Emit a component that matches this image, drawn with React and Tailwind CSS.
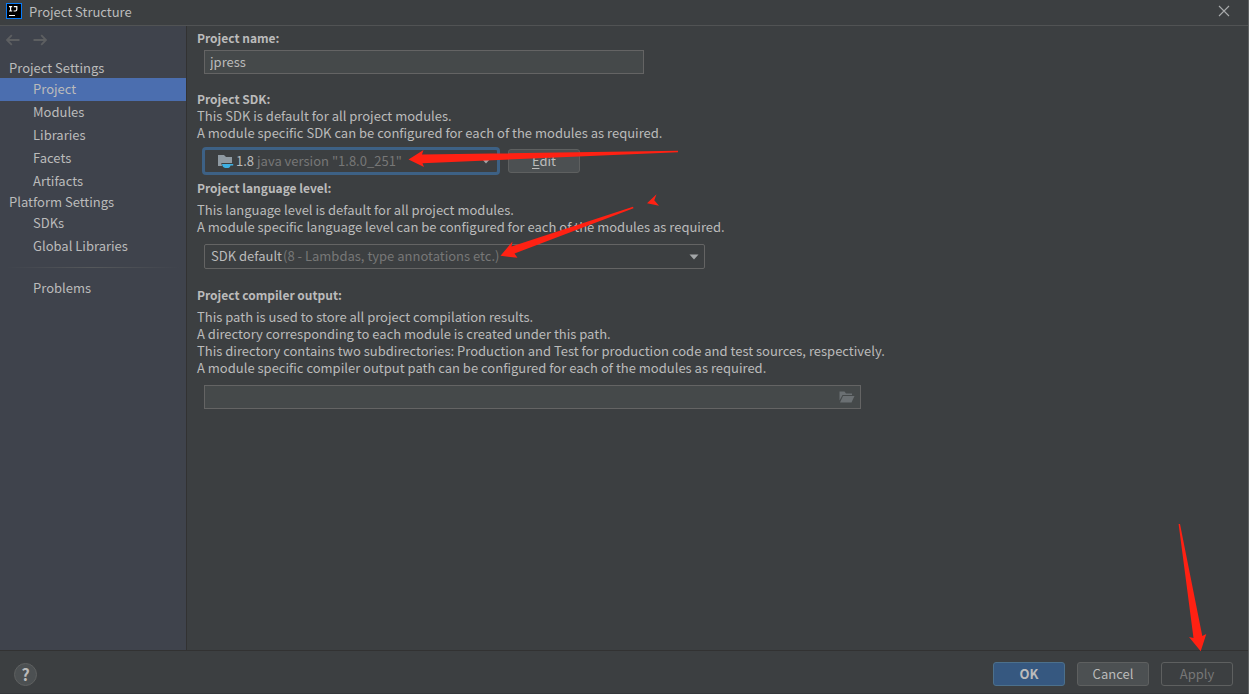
const projectSettings = ['Project', 'Modules', 'Libraries', 'Facets', 'Artifacts'];
const platformSettings = ['SDKs', 'Global Libraries'];

function NavGroup({ title, items, active }) {
  return (
    <section>
      <h2 className="h-[19px] pl-[9px] leading-[17px]">{title}</h2>
      <ul>
        {items.map((item) => (
          <NavItem key={item} label={item} active={item === active} />
        ))}
      </ul>
    </section>
  );
}

function NavItem({ label, active }) {
  return (
    <li>
      <a
        href={'#' + label}
        aria-current={active ? 'page' : undefined}
        className={'block h-[23px] pl-[33px] leading-[21px] ' + (active ? 'bg-[#4b6eaf]' : '')}
      >
        {label}
      </a>
    </li>
  );
}

function NavArrow({ flip, label }) {
  return (
    <button type="button" aria-label={label} className="text-[#5d5f61]">
      <svg width="14" height="12" viewBox="0 0 14 12" fill="none" stroke="currentColor" strokeWidth="1.8">
        {flip ? <path d="M0.5 6H13M8.2 1.2L13 6L8.2 10.8" /> : <path d="M13.5 6H1M5.8 1.2L1 6L5.8 10.8" />}
      </svg>
    </button>
  );
}

function Caret() {
  return (
    <svg width="10" height="6" viewBox="0 0 10 6" fill="#a3a6a8">
      <path d="M0.5 0.5H9.5L5 5.5Z" />
    </svg>
  );
}

function Button({ children, look, ...rest }) {
  return (
    <button type="button" className={'h-6 w-[72px] rounded-[3px] border text-center leading-[22px] ' + look} {...rest}>
      {children}
    </button>
  );
}

const plain = 'border-[#5e6060] bg-[#4c5052]';

function Label({ htmlFor, children }) {
  return (
    <label htmlFor={htmlFor} className="block text-[12px] font-bold">
      {children}
    </label>
  );
}

export default function App() {
  return (
    <div className="relative flex min-h-screen flex-col overflow-hidden border-r border-[#606364] bg-[#3c3f41] font-['Noto_Sans_CJK_SC','Noto_Sans',sans-serif] text-[13px] leading-[17px] text-[#bbbbbb]">
      <header className="flex h-[26px] items-center justify-between border-b border-[#515354] pr-[18px] pb-[3px] pl-[6px]">
        <div className="flex items-center gap-[7px]">
          <svg width="16" height="16" viewBox="0 0 16 16">
            <rect x="0.5" y="0.5" width="15" height="15" fill="#000" stroke="#087cfa" />
            <path
              d="M3 3.6H6.2M4.6 3.6V8M3 8H6.2M7.8 3.6H10.8V6.6Q10.8 8 9.4 8H7.6M3 12.5H9"
              fill="none"
              stroke="#fff"
              strokeWidth="1.2"
            />
          </svg>
          <h1>Project Structure</h1>
        </div>
        <button type="button" aria-label="Close">
          <svg width="12" height="12" viewBox="0 0 12 12" fill="none" stroke="#a9abac" strokeWidth="1.1">
            <path d="M1 1L11 11M11 1L1 11" />
          </svg>
        </button>
      </header>

      <div className="flex grow">
        <nav className="w-[187px] shrink-0 border-r border-[#323232] bg-[#3f434c]">
          <div className="flex h-[33px] items-center gap-[13px] pb-[5px] pl-[6px]">
            <NavArrow label="Back" />
            <NavArrow label="Forward" flip />
          </div>
          <NavGroup title="Project Settings" items={projectSettings} active="Project" />
          <NavGroup title="Platform Settings" items={platformSettings} />
          <div className="mx-[6px] my-[9px] h-px bg-linear-to-r from-transparent via-[#55585b] to-transparent" />
          <ul>
            <NavItem label="Problems" />
          </ul>
        </nav>

        <main className="min-w-0 grow pt-[3px] pl-[10px]">
          <section>
            <Label htmlFor="name">Project name:</Label>
            <input
              id="name"
              defaultValue="jpress"
              className="mt-1 ml-[7px] block h-6 w-[440px] border border-[#646464] bg-[#45494a] px-[5px] pb-[2px] outline-none"
            />
          </section>

          <section className="mt-4">
            <Label htmlFor="sdk">Project SDK:</Label>
            <p>This SDK is default for all project modules.</p>
            <p>A module specific SDK can be configured for each of the modules as required.</p>
            <div className="mt-[6px] ml-[5px] flex items-center gap-2">
              <div className="relative w-[298px]">
                <select
                  id="sdk"
                  className="block h-7 w-full appearance-none rounded-[4px] border-[3px] border-[#3d6185] bg-transparent pb-[2px] pl-[31px] outline-none"
                >
                  <option>1.8</option>
                </select>
                <div className="pointer-events-none absolute inset-0 flex items-center pr-[9px] pl-4">
                  <svg width="16" height="16" viewBox="0 0 16 16">
                    <path d="M0 2H6L8 4H14V13H0Z" fill="#8f9aa2" />
                    <path d="M3.2 10H15V13L11.5 15H4.6Z" fill="#3c3f41" />
                    <path d="M4 11H15.2V12.6H12.6Q12 15 10.4 15H7.2Q4.4 14.4 4 11Z" fill="#3fb1e3" />
                  </svg>
                  <span className="ml-[23px] grow pb-[2px] text-[#777777]">java version "1.8.0_251"</span>
                  <Caret />
                </div>
              </div>
              <Button look={plain}>
                <span className="underline underline-offset-2">E</span>dit
              </Button>
            </div>
          </section>

          <section className="mt-1">
            <Label htmlFor="level">Project language level:</Label>
            <p className="mt-[5px]">This language level is default for all project modules.</p>
            <p>A module specific language level can be configured for each of the modules as required.</p>
            <div className="relative mt-[9px] ml-[7px] w-[501px]">
              <select
                id="level"
                className="block h-[25px] w-full appearance-none rounded-[2px] border border-[#646464] bg-transparent pb-[2px] pl-[6px] outline-none"
              >
                <option>SDK default</option>
              </select>
              <div className="pointer-events-none absolute inset-0 flex items-center justify-between pr-[6px] pl-[79px]">
                <span className="pb-[2px] text-[#777777]">(8 - Lambdas, type annotations etc.)</span>
                <Caret />
              </div>
            </div>
          </section>

          <section className="mt-[17px]">
            <Label htmlFor="output">Project compiler output:</Label>
            <p className="mt-[5px]">This path is used to store all project compilation results.</p>
            <p>A directory corresponding to each module is created under this path.</p>
            <p>This directory contains two subdirectories: Production and Test for production code and test sources, respectively.</p>
            <p>A module specific compiler output path can be configured for each of the modules as required.</p>
            <div className="mt-[9px] ml-[7px] flex h-6 w-[657px] items-center border border-[#646464] bg-[#45494a] pr-[5px]">
              <input id="output" className="min-w-0 grow bg-transparent px-[5px] outline-none" />
              <button type="button" aria-label="Browse">
                <svg width="16" height="12" viewBox="0 0 16 12" fill="#6b7073">
                  <path d="M0.5 0.5H5.5L7 2.5H13V4H3.5L0.5 9.5Z" />
                  <path d="M4 5H15.5L12.5 11.5H1Z" />
                </svg>
              </button>
            </div>
          </section>
        </main>
      </div>

      <footer className="flex h-[44px] items-center justify-between border-y border-t-[#323232] border-b-[#34373a] pt-1 pr-[15px] pl-[14px]">
        <button
          type="button"
          aria-label="Help"
          className="size-[23px] rounded-full border border-[#5e6060] bg-[#4c5052] text-center text-[16px] leading-[20px] font-bold"
        >
          ?
        </button>
        <div className="flex gap-3">
          <Button look="border-[#4c708c] bg-[#365880] font-bold">OK</Button>
          <Button look={plain}>Cancel</Button>
          <Button look="border-[#5e6060] text-[#777777]" disabled>
            Apply
          </Button>
        </div>
      </footer>

      <div className="absolute top-[247px] -right-px h-[52px] w-px bg-[#26282a]" />
      <svg className="pointer-events-none absolute top-[145px] left-[400px]" width="285" height="120" viewBox="400 145 285 120" fill="#ff2113">
        <path d="M408.5 159.5L423.5 150L422 154.5L678 150.8V152.2L422.5 163.3L424 167Z" />
        <path d="M500.5 255.8L512.5 241.5L511.5 246.5L633 206.8L633.5 208.2L514.5 253.5L517.5 257.8Z" />
        <path d="M647 203.3L656.5 194.3L654.3 200.3L659 205.7Z" />
      </svg>
      <svg className="pointer-events-none absolute right-[34px] bottom-[40px]" width="40" height="134" viewBox="1174 520 40 134" fill="#ff2113">
        <path d="M1178.6 524L1180 524L1202.3 636L1206.3 634L1200.7 651.3L1189 637L1193.5 638Z" />
      </svg>
    </div>
  );
}
